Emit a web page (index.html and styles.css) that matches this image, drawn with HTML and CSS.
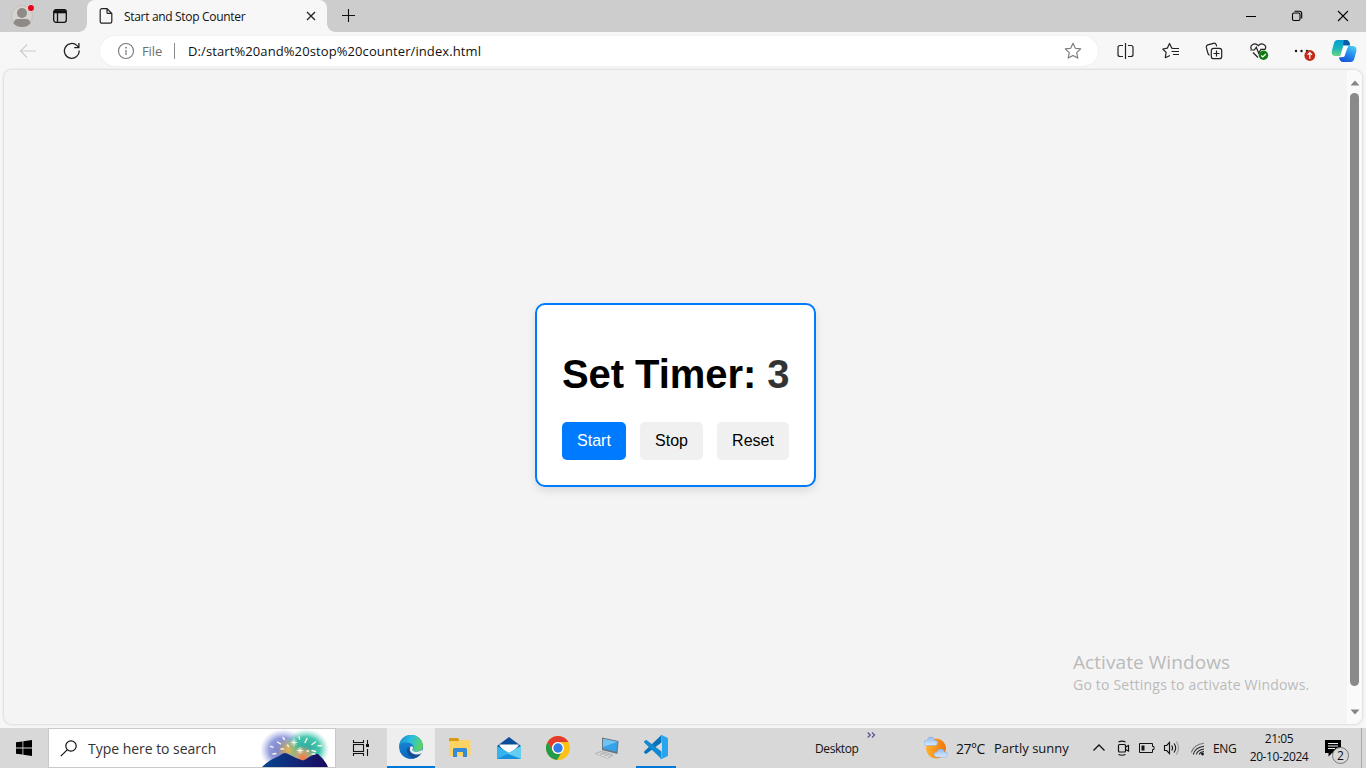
FILE: index.html
```html
<!DOCTYPE html>
<html lang="en">
<head>
<meta charset="utf-8">
<title>Start and Stop Counter</title>
<link rel="stylesheet" href="styles.css">
</head>
<body>
<div class="screen">
  <header class="tabbar">
    <div class="cell avatar"><svg width="24" height="28" viewBox="0 0 24 28"><circle cx="12" cy="14" r="10.5" fill="#d5d2cf" stroke="#c4c1be"/><circle cx="12" cy="11" r="5" fill="#8e8a86"/><path d="M3.5 21.5Q4 17 8 17h8q4 0 4.500 4.500Q17 25 12 25T3.500 21.500z" fill="#8e8a86"/><circle cx="21" cy="6" r="3.600" fill="#e60012" stroke="#ddd"/></svg></div>
    <div class="cell tabsicon"><svg width="16" height="16" viewBox="0 0 16 16" fill="none" stroke="#111" stroke-width="1.300"><rect x="1.700" y="1.700" width="12.600" height="12.600" rx="2.200"/><path d="M5.500 5v9"/><path d="M2 3.700h12" stroke-width="3.200"/></svg></div>
    <div class="tab">
      <svg width="14" height="16" viewBox="0 0 14 16" fill="none" stroke="#222" stroke-width="1.200"><path d="M3 .7h5l4.800 4.800v8a1.700 1.700 0 0 1-1.700 1.700H3A1.700 1.700 0 0 1 1.200 13.500V2.400A1.700 1.700 0 0 1 3 .7zM8 .9v3.500a1 1 0 0 0 1 1h3.700"/></svg>
      <span class="tab-title">Start and Stop Counter</span>
      <svg class="tab-close" width="10" height="10" viewBox="0 0 10 10" stroke="#222" stroke-width="1.300"><path d="M1 1l8 8M9 1L1 9"/></svg>
    </div>
    <div class="cell newtab"><svg width="13" height="13" viewBox="0 0 13 13" stroke="#111" stroke-width="1.100"><path d="M6.500 0v13M0 6.500h13"/></svg></div>
    <div class="win-controls">
      <div class="cell"><svg width="10" height="10" viewBox="0 0 10 10" stroke="#000"><path d="M0 5.500h10"/></svg></div>
      <div class="cell"><svg width="12" height="12" viewBox="0 0 12 12" fill="none" stroke="#000" stroke-width="1.100"><rect x="1.500" y="3" width="7.500" height="7.500" rx="1.500"/><path d="M3.500 1.200h5a2.200 2.200 0 0 1 2.200 2.200v5"/></svg></div>
      <div class="cell"><svg width="12" height="12" viewBox="0 0 12 12" stroke="#000" stroke-width="1.100"><path d="M1 1l10 10M11 1L1 11"/></svg></div>
    </div>
  </header>

  <div class="toolbar">
    <div class="cell back"><svg width="18" height="16" viewBox="0 0 18 16" fill="none" stroke="#ccc" stroke-width="1.100"><path d="M17 8H1.500M8 1.500L1.500 8 8 14.500"/></svg></div>
    <div class="cell reload"><svg width="18" height="18" viewBox="0 0 18 18" fill="none" stroke="#222" stroke-width="1.300"><path d="M16.200 8.500A7.400 7.400 0 1 1 14 3.600L15.800 5.500M15.900 1v4.700h-4.700"/></svg></div>
    <div class="address">
      <svg class="info" width="18" height="18" viewBox="0 0 18 18"><circle cx="9" cy="9" r="7.500" fill="none" stroke="#777" stroke-width="1.100"/><path d="M9 8v5" stroke="#777" stroke-width="1.200"/><circle cx="9" cy="5.700" r=".9" fill="#777"/></svg>
      <span class="file">File</span>
      <span class="sep"></span>
      <span class="url">D:/start%20and%20stop%20counter/index.html</span>
      <svg class="star" width="18" height="18" viewBox="0 0 18 18" fill="none" stroke="#777" stroke-linejoin="round" stroke-width="1.100"><path d="M9 1.300l2.300 5 5.400.6-4 3.700 1.100 5.500L9 13.400l-4.800 2.700 1.100-5.500-4-3.700 5.400-.6z"/></svg>
    </div>
    <div class="tools">
      <div class="cell"><svg width="17" height="18" viewBox="0 0 17 18" fill="none" stroke="#222" stroke-width="1.200"><path d="M8.500 1v16M6 3.500H3A2 2 0 0 0 1 5.500v7a2 2 0 0 0 2 2h3M11 3.500h3a2 2 0 0 1 2 2v7a2 2 0 0 1-2 2h-3"/></svg></div>
      <div class="cell fav"><svg width="18" height="18" viewBox="0 0 18 18" fill="none" stroke="#222" stroke-width="1.200" stroke-linejoin="round"><path d="M11.500 6.500L9.800 6.200 7.500 1.500 5.300 6.200.8 7l3.300 3.300-.8 5.400L8 13.500M11 6.500h6M9.500 9.500H17M11 12.500h6"/></svg></div>
      <div class="cell"><svg width="18" height="18" viewBox="0 0 18 18" fill="none" stroke="#222" stroke-width="1.200"><rect x="6.300" y="6.300" width="10.400" height="10.400" rx="2.300"/><path d="M11.500 8.500v6M8.500 11.500h6M4.600 13.200Q3.300 12.700 3 11.500L1.300 5.400Q1 3.500 2.800 2.900L8.600 1.300q2-.4 2.600 1.400l.5 1.700"/></svg></div>
      <div class="cell heart"><svg width="20" height="18" viewBox="0 0 20 18" fill="none" stroke="#222" stroke-width="1.200"><path d="M2.400 7.300C.3 3.500 5.700-.5 9.300 3.700c3.500-4.200 9-.1 6.800 3.600M4 10.500l5 5M1.300 8h4l2-2.700 2.400 6 2.200-4h4.500"/><circle cx="14.500" cy="13.300" r="4.700" fill="#107c10" stroke="none"/><path d="M12.300 13.500l1.500 1.500 3-3" stroke="#fff"/></svg></div>
      <div class="cell more"><svg width="22" height="20" viewBox="0 0 22 20"><g fill="#111"><circle cx="2" cy="10" r="1.200"/><circle cx="7.500" cy="10" r="1.200"/><circle cx="13" cy="10" r="1.200"/></g><circle cx="15.800" cy="14.500" r="5.400" fill="#c42b1c"/><path d="M15.800 17.800v-6M13.600 13.800l2.200-2.200 2.200 2.200" fill="none" stroke="#fff" stroke-width="1.200"/></svg></div>
      <div class="cell copilot"><svg width="26" height="24" viewBox="0 0 26 24">
        <defs><linearGradient id="ca" x1=".2" y1="0" x2=".2" y2="1"><stop stop-color="#079bd7"/><stop offset=".5" stop-color="#18b5bc"/><stop offset="1" stop-color="#6bd681"/></linearGradient><linearGradient id="cb" x1=".8" y1="0" x2=".3" y2="1"><stop stop-color="#48cdf4"/><stop offset=".55" stop-color="#2384ea"/><stop offset="1" stop-color="#1556d9"/></linearGradient></defs>
        <path d="M15 5.500L19 5q-.6-3.800-4-4H6.500Q3.900 1 3 4L.9 11.500Q0 17 4.500 17.100h4.700L12.500 6z" fill="url(#ca)"/><path d="M15 1q3.400.2 4.200 5.600h-4.500L12 6.200 12.900 1z" fill="#075da5"/><path d="M11.500 18L8 18.500q.8 4.300 4 4.500h7.700q2.600 0 3.500-3l2.100-7.500q.9-5.300-3.600-5.500h-4.500z" fill="url(#cb)"/><path d="M15.300 7h1.700l-3.300 9.700q-.4 1.200-1.700 1.200H9.700l3.400-9.500q.5-1.400 2.200-1.400z" fill="#fff"/></svg></div>
    </div>
  </div>

  <main class="viewport">
    <section class="page">
      <div class="card">
        <h1>Set Timer: <span class="count">3</span></h1>
        <div class="buttons"><button class="btn primary">Start</button><button class="btn stop">Stop</button><button class="btn reset">Reset</button></div>
      </div>
      <aside class="activate"><p class="act-title">Activate Windows</p><p class="act-sub">Go to Settings to activate Windows.</p></aside>
    </section>
    <div class="scrollbar">
      <svg width="10" height="6" viewBox="0 0 10 6"><path d="M.5 5.500L5 .5l4.500 5z" fill="#858585"/></svg>
      <div class="thumb"></div>
      <svg width="10" height="6" viewBox="0 0 10 6"><path d="M.5.5L5 5.500 9.500.5z" fill="#858585"/></svg>
    </div>
  </main>

  <footer class="taskbar">
    <div class="cell start"><svg width="16" height="16" viewBox="0 0 16 16"><path d="M0 2.300L6.500 1.400v6.200H0zM7.300 1.300L16 0v7.600H7.300zM0 8.400h6.500v6.200L0 13.700zM7.300 8.400H16V16l-8.700-1.300z"/></svg></div>
    <div class="search">
      <svg class="lens" width="17" height="17" viewBox="0 0 17 17" fill="none" stroke="#111" stroke-width="1.200"><circle cx="11" cy="6" r="5.200"/><path d="M7.200 9.800L.8 16.200"/></svg>
      <span class="search-text">Type here to search</span>
      <svg class="fireworks" width="70" height="38" viewBox="0 0 70 38">
        <defs><radialGradient id="f1"><stop stop-color="#6e78c8"/><stop offset=".6" stop-color="#7f8ad6" stop-opacity=".85"/><stop offset="1" stop-color="#a6aee6" stop-opacity="0"/></radialGradient><radialGradient id="f2"><stop stop-color="#27a79b"/><stop offset=".6" stop-color="#2fc0a6" stop-opacity=".9"/><stop offset="1" stop-color="#7bd8c8" stop-opacity="0"/></radialGradient><radialGradient id="f3"><stop stop-color="#ff7043"/><stop offset=".5" stop-color="#e6a269" stop-opacity=".75"/><stop offset="1" stop-color="#e6a269" stop-opacity="0"/></radialGradient><radialGradient id="f4"><stop stop-color="#e8b34a"/><stop offset="1" stop-color="#d9b45a" stop-opacity="0"/></radialGradient><linearGradient id="hill"><stop stop-color="#07458f"/><stop offset="1" stop-color="#1b0a60"/></linearGradient></defs>
        <ellipse cx="22" cy="21" rx="23" ry="21" fill="url(#f1)"/><ellipse cx="45" cy="20" rx="23" ry="20" fill="url(#f2)"/><circle cx="27" cy="21" r="12" fill="url(#f4)"/><circle cx="42" cy="29" r="13" fill="url(#f3)"/>
        <path d="M1 38Q8 31 17 27.500L22 24.500q2-1 4 0L34 28.500q5 2 8 3 3-1 6-3.500l5-2.500q3-1.500 5 .5Q64 31 67 38z" fill="url(#hill)"/>
        <g stroke="#fff6e0" stroke-width="1.400" stroke-linecap="round"><path d="M9.500 17.500l2.500.7M16.500 13l3 1.800M22 8.500l1.500 2M12 25l3-.5M20 20h2.500M26.500 16l1 1.500M44 13.500l2-4M51 15.500l3.500-2.500M57 16.800h3.500M51 21.500l3.500 1M51 25h3M38 8l.5 2M46 22h1.500"/><path d="M30 13.500h6M33 10v7M31 11.500l4 4M35 11.500l-4 4M36 21.500h6M39 18.500v6M37 19.500l4 4M41 19.500l-4 4" stroke-width=".9"/></g>
      </svg>
    </div>
    <div class="cell taskview"><svg width="18" height="18" viewBox="0 0 18 18" fill="none" stroke="#111" stroke-width="1.100"><path d="M1.500 1v2.500h10V1M1.500 17v-2.500h10V17M15.500 1v4M15.500 10v7"/><rect x="1.500" y="5.500" width="10" height="7"/><path d="M14 6.500h3" stroke-width="3"/></svg></div>
    <div class="cell app active"><svg width="24" height="24" viewBox="0 0 24 24">
      <defs><linearGradient id="e1" x1="0" y1=".3" x2="1" y2=".6"><stop stop-color="#168ed5"/><stop offset=".45" stop-color="#2bbfdc"/><stop offset="1" stop-color="#62d655"/></linearGradient><linearGradient id="e2" x1=".2" y1="0" x2=".5" y2="1"><stop stop-color="#1b8cd6"/><stop offset="1" stop-color="#0b66bd"/></linearGradient></defs>
      <circle cx="12" cy="12" r="11.900" fill="url(#e2)"/>
      <path d="M.2 10.500C1.200 4 6 .1 12 .1c7 0 12 5 11.900 10.500 0 4-3.200 6-6.900 6-2.700 0-4-1-3-2.400 1.500-2.200.2-6-4.500-6.500C5 7.200 1.500 8.500.2 10.500z" fill="url(#e1)"/>
      <path d="M8.700 12.500C6.500 16 9 22 14.500 23.600q5-1.100 7.900-5.600-5 2.500-9.400.4-3.500-1.700-2.500-5.500z" fill="#124f96"/>
      <path d="M11.500 11.500q1.800-.6 2.700.8-.2 1-.7 1.900-.6 1.300 1.100 2.100 3.500 1.400 7.200-.7l1.500-1.200-.5 3.500q-4.800 2.800-9 .7-4.300-2.300-2.300-7.100z" fill="#eee"/></svg></div>
    <div class="cell app"><svg width="22" height="20" viewBox="0 0 22 20"><path d="M0 1q0-1 1-1h8l2 3v13H0z" fill="#d99a13"/><path d="M0 4q0-1 1-1h8l2-1h9.500q1 0 1 1v14q0 1-1 1H1q-1 0-1-1z" fill="#fdd364"/><path d="M4 19v-7.500q0-1.500 1.500-1.500h11q1.500 0 1.500 1.500V19h-4v-5H8v5z" fill="#368ad4"/></svg></div>
    <div class="cell app"><svg width="24" height="24" viewBox="0 0 24 24"><path d="M0 10L12 1l12 9v5H0z" fill="#0b4f9c"/><path d="M2 9.500h20L12 19z" fill="#fff"/><path d="M0 10l12 6.800L24 10V23H0z" fill="#34b4ed"/><path d="M2 8.500h20l-10 8z" fill="#fff"/><path d="M24 10L9 18.500 24 23z" fill="#65ceef"/><path d="M0 23l11-5.300L24 23z" fill="#1490df"/></svg></div>
    <div class="cell app"><svg width="24" height="24" viewBox="0 0 24 24"><circle cx="12" cy="12" r="12" fill="#fbc116"/><path d="M1.600 6A12 12 0 0 1 22.400 6H12a6 6 0 0 0-5.200 9z" fill="#e33b2e"/><path d="M1.600 6l5.200 9a6 6 0 0 0 5.200 3l3.200-.9L11 24A12 12 0 0 1 1.600 6z" fill="#249b4c"/><circle cx="12" cy="12" r="6" fill="#fff"/><circle cx="12" cy="12" r="4.700" fill="#327ce9"/></svg></div>
    <div class="cell app pc"><svg width="26" height="24" viewBox="0 0 26 24"><path d="M8 1.500L24.500 5l-1 13L8 14z" fill="#68777f"/><path d="M9 2.700l14.300 3-.8 10.300L9 12.600z" fill="#37a2e7"/><path d="M9 2.700l14.300 3L9 11z" fill="#70c4f3"/><path d="M1 17.500L8 15l11 4-5.500 3.500z" fill="#e5e5e5" stroke="#a5a8aa" stroke-width=".7"/><path d="M4 16.500l12 4.400M6 15.700l12 4M6 19l6-3M10 20.500l5-3" stroke="#9a9fa3" stroke-width=".6"/></svg></div>
    <div class="cell app vscode"><svg width="24" height="24" viewBox="0 0 24 24"><path d="M17.500 0v7.500L2.800 18.600Q2 19.200 1.200 18.600L.4 17.900Q-.4 17 .4 16.200z" fill="#0872ba"/><path d="M.4 7.800Q-.4 7 .4 6.100l.8-.7q.8-.7 1.600-.2L17.500 16.500V24z" fill="#1389d1"/><path d="M17.500 0L23 2.500q1 .5 1 1.500v16q0 1-1 1.500L17.500 24q-1 .2-1.500-.8l2-1V2l-2-1z" fill="#27a5ef"/></svg></div>
    <div class="desktop">Desktop</div>
    <svg class="chevrons" width="9" height="6" viewBox="0 0 9 6" fill="none" stroke="#595995" stroke-width="1.300"><path d="M.7.500L3.200 3 .7 5.500M5 .5L7.500 3 5 5.500"/></svg>
    <svg class="weather" width="24" height="24" viewBox="0 0 24 24"><defs><linearGradient id="sun"><stop stop-color="#ffb22d"/><stop offset="1" stop-color="#ee750b"/></linearGradient><linearGradient id="cloud" x2="0" y2="1"><stop stop-color="#91bbf0"/><stop offset="1" stop-color="#d8e9ff"/></linearGradient></defs><circle cx="12" cy="12.500" r="10" fill="url(#sun)"/><path d="M2.500 9.500Q0 9 0 6.700t3.300-2.500Q4 1 7 1t3.500 3.200q3-.1 3 2.600t-2.500 2.700z" fill="url(#cloud)" stroke="#85abe0" stroke-width=".5"/><path d="M12.500 21q-2.500-.4-2.500-2.500t3-2.500q.8-3 3.700-3t3.800 3q3-.1 3 2.500T21 21z" fill="url(#cloud)" stroke="#85abe0" stroke-width=".5"/></svg>
    <span class="temp">27°C</span><span class="sky">Partly sunny</span>
    <div class="tray">
      <svg width="14" height="16" viewBox="0 0 14 16" fill="none" stroke="#111" stroke-width="1.300"><path d="M1.500 10.500L7 5l5.500 5.500"/></svg>
      <svg class="meet" width="14" height="16" viewBox="0 0 14 16" fill="none" stroke="#111" stroke-width="1.200"><rect x="2.500" y="4.500" width="7" height="7.500" rx="1"/><path d="M9.500 7l3-1.500v5.500l-3-1.500M2.500 2q3.500-1.800 7 0M2.500 14.500q3.500 1.500 7 0"/></svg>
      <svg width="16" height="16" viewBox="0 0 16 16" fill="none" stroke="#111"><path d="M.5 3.500h13v3h1.500v3h-1.500v3H.5z"/><path d="M2.500 5.500h3v5h-3z" fill="#111" stroke="none"/></svg>
      <svg width="18" height="16" viewBox="0 0 18 16" fill="none" stroke="#111" stroke-width="1.100"><path d="M1.500 5.500h2.200L6.500 2.500v11L3.700 10.500H1.500zM8.700 5.500q1.800 2.500 0 5M11 3.500q3.400 4.500 0 9"/><path d="M13.300 1.500q4.500 6.500 0 13" stroke="#999"/></svg>
      <svg class="wifi" width="16" height="16" viewBox="0 0 16 16" fill="none" stroke="#222" stroke-width="1.100"><path d="M3.300 14.500Q5 7.500 14 6.200M6.300 14.500q1-4.500 7.700-5.500M9.300 14.500q.7-2.500 4.700-3"/><path d="M1.300 12.500Q4 4.500 14 3.300" stroke="#777"/><circle cx="12.500" cy="14" r="1.400" fill="#111" stroke="none"/></svg>
    </div>
    <span class="lang">ENG</span>
    <div class="clock"><span class="time">21:05</span><span class="date">20-10-2024</span></div>
    <div class="notice"><svg width="17" height="17" viewBox="0 0 17 17"><path d="M0 0h16v13H7l-3.500 3.500V13H0z" fill="#000"/><path d="M3 3.500h10M3 6h10M3 8.500h7" stroke="#eee"/></svg><span class="badge">2</span></div>
    <div class="show-desktop"></div>
  </footer>
</div>
</body>
</html>
```
FILE: styles.css
```css
* { box-sizing: border-box; }
body { margin: 0; overflow: hidden; font-family: "Open Sans", "Noto Sans", sans-serif; color: #111; }
svg { display: block; flex: none; }
p, h1 { margin: 0; }
span { white-space: nowrap; }
.screen { width: 1366px; height: 768px; display: flex; flex-direction: column; background: #f7f7f7; }
.cell { display: flex; align-items: center; justify-content: center; flex: none; }

.tabbar { height: 32px; flex: none; display: flex; background: #cdcdcd; }
.avatar { width: 44px; padding-right: 1px; }
.tabsicon { width: 32px; }
.tab { width: 240px; margin-left: 11px; padding: 0 11px 0 12px; display: flex; align-items: center; background: #f7f7f7; border-radius: 8px 8px 0 0; position: relative; }
.tab::before, .tab::after { content: ""; position: absolute; bottom: 0; width: 8px; height: 8px; }
.tab::before { left: -8px; background: radial-gradient(circle at 0 0, #cdcdcd 7.500px, #f7f7f7 8px); }
.tab::after { right: -8px; background: radial-gradient(circle at 100% 0, #cdcdcd 7.500px, #f7f7f7 8px); }
.tab-title { margin-left: 11px; font-size: 12px; letter-spacing: -.32px; }
.tab-close { margin-left: auto; }
.newtab { width: 43px; padding-bottom: 1px; }
.win-controls { margin-left: auto; display: flex; }
.win-controls .cell { width: 46px; }

.toolbar { height: 38px; flex: none; display: flex; align-items: center; }
.back { width: 50px; padding-left: 6px; }
.reload { width: 50px; padding-right: 6px; }
.address { width: 998px; height: 30px; border-radius: 15px; background: #fff; display: flex; align-items: center; padding: 0 16px 0 17px; box-shadow: 0 0 2px #e4e4e4; }
.file { margin-left: 7px; width: 26px; font-size: 13px; letter-spacing: -.1px; color: #6e6e6e; }
.sep { margin-left: 6px; width: 1px; height: 16px; background: #8c8c8c; }
.url { margin-left: 13px; font-size: 13px; letter-spacing: .1px; }
.star { margin-left: auto; }
.tools { margin-left: 5px; display: flex; }
.tools .cell { width: 44.300px; }
.tools .fav { padding-left: 3px; }
.tools .heart { padding-left: 2px; }
.tools .more { padding-left: 6px; }
.tools .copilot { width: 39px; }

.viewport { height: 654px; margin: 0 4px; flex: none; display: flex; background: #f4f4f4; border-radius: 8px; overflow: hidden; box-shadow: 0 0 3px #bbb; }
.page { width: 1343px; display: flex; flex-direction: column; align-items: center; background: #f4f4f4; }
.card { width: 281px; height: 184px; margin-top: 233px; padding: 46px 25px 25px; border: 2px solid #007bff; border-radius: 10px; background: #fff; box-shadow: 0 4px 8px rgba(0,0,0,.1); font-family: "Liberation Sans", Arial, sans-serif; }
h1 { font-size: 40px; line-height: 46px; letter-spacing: -.07px; white-space: nowrap; color: #000; }
.count { color: #333; }
.buttons { margin-top: 25px; display: flex; justify-content: space-between; }
.btn { height: 38px; padding: 0; border: 0; border-radius: 5px; font: 16px "Liberation Sans", Arial, sans-serif; color: #000; background: #f0f0f0; }
.primary { width: 64px; background: #007bff; color: #fff; }
.stop { width: 63px; }
.reset { width: 72px; }
.activate { align-self: flex-end; width: 274px; margin-top: 161px; color: #bababa; white-space: nowrap; }
.act-title { font-size: 19px; line-height: 28px; letter-spacing: .07px; }
.act-sub { font-size: 14px; line-height: 18px; letter-spacing: .2px; }
.scrollbar { width: 15px; background: #fafafa; display: flex; flex-direction: column; align-items: center; padding: 10px 0 9px; }
.thumb { width: 9px; height: 593px; margin: 7px 0 auto; border-radius: 5px; background: #8a8a8a; }

.taskbar { height: 40px; margin-top: auto; flex: none; display: flex; align-items: center; background: #d8d8d8; }
.taskbar > .cell { height: 40px; }
.start { width: 48px; }
.search { width: 288px; height: 40px; border: 1px solid #c9c9c9; background: #fff; display: flex; align-items: center; padding: 0 4px 0 11px; }
.search-text { margin-left: 11px; font-size: 14px; letter-spacing: -.03px; color: #333; }
.fireworks { margin-left: auto; }
.taskview { width: 51px; padding-right: 2px; }
.app { width: 49px; }
.active { width: 48px; background: #eee; border-bottom: 2px solid #0078d7; }
.pc { width: 52px; padding-right: 2px; }
.vscode { width: 40px; margin: 0 4px 0 2px; border-bottom: 2px solid #0078d7; }
.desktop { width: 46px; margin-left: 135px; font-size: 12px; letter-spacing: -.4px; }
.chevrons { margin: -27px 0 0 6px; }
.weather { margin-left: 48px; }
.temp { margin-left: 8px; width: 38px; font-size: 14px; letter-spacing: -.5px; }
.sky { width: 90px; font-size: 13px; }
.tray { display: flex; align-items: center; gap: 8px; width: 121px; margin-left: 8px; }
.meet { margin: 0 1px 0 2px; }
.wifi { margin-left: 1px; }
.lang { width: 31px; font-size: 12px; letter-spacing: -.3px; }
.clock { width: 70px; display: flex; flex-direction: column; align-items: center; font-size: 12px; line-height: 18px; letter-spacing: -.4px; }
.notice { margin-left: 11px; position: relative; }
.badge { position: absolute; left: 7px; top: 7px; width: 17px; height: 17px; border: 1px solid #777; border-radius: 50%; background: #d8d8d8; font-size: 12px; line-height: 15px; text-align: center; }
.show-desktop { margin-left: auto; width: 5px; height: 40px; border-left: 1px solid #aaa; }
```
